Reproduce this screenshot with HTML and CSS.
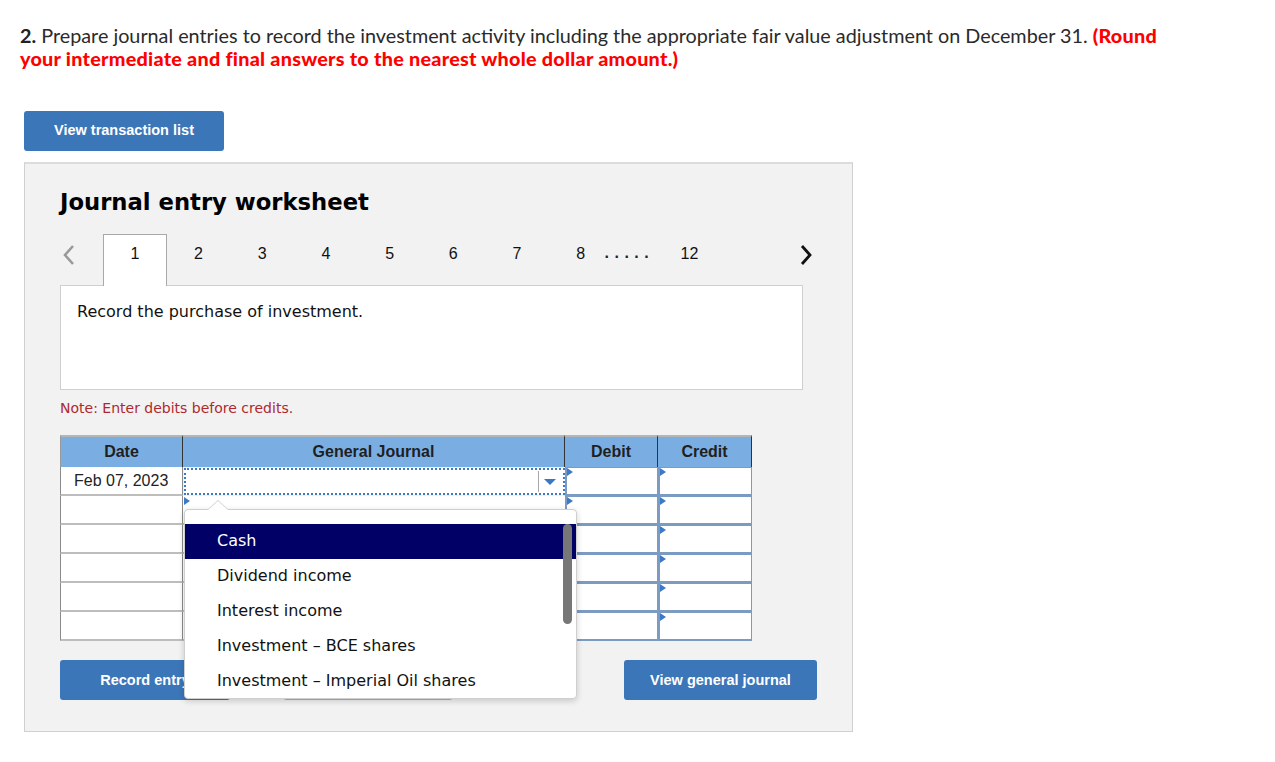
FILE: index.html
```html
<!DOCTYPE html>
<html lang="en">
<head>
<meta charset="utf-8">
<title>Journal entry worksheet</title>
<link rel="stylesheet" href="styles.css">
</head>
<body>
<div class="question">
  <p class="prompt"><b>2.</b> Prepare journal entries to record the investment activity including the appropriate fair value adjustment on December 31. <strong class="round">(Round</strong> <strong class="round">your intermediate and final answers to the nearest whole dollar amount.)</strong></p>
</div>

<button class="btn btn-list">View transaction list</button>

<section class="panel">
  <h2 class="ws-title">Journal entry worksheet</h2>

  <nav class="tabs">
    <span class="arrow prev"><svg width="14" height="22" viewBox="0 0 14 22"><polyline points="11,2 3,11 11,20" fill="none" stroke="#999" stroke-width="2.6"/></svg></span>
    <span class="tab active">1</span>
    <span class="tab">2</span>
    <span class="tab">3</span>
    <span class="tab">4</span>
    <span class="tab">5</span>
    <span class="tab">6</span>
    <span class="tab">7</span>
    <span class="tab">8</span>
    <span class="dots">.....</span>
    <span class="tab last">12</span>
    <span class="arrow next"><svg width="14" height="22" viewBox="0 0 14 22"><polyline points="3,2 11,11 3,20" fill="none" stroke="#111" stroke-width="2.8"/></svg></span>
  </nav>

  <div class="desc">Record the purchase of investment.</div>

  <p class="note">Note: Enter debits before credits.</p>

  <div class="journal-wrap">
    <div class="journal">
      <div class="hd first">Date</div>
      <div class="hd">General Journal</div>
      <div class="hd">Debit</div>
      <div class="hd">Credit</div>

      <div class="c date">Feb 07, 2023</div>
      <div class="c acct focused"><span class="sel-sep"></span><span class="sel-arrow"></span></div>
      <div class="c amt"></div>
      <div class="c amt"></div>

      <div class="c date"></div>
      <div class="c acct"></div>
      <div class="c amt"></div>
      <div class="c amt"></div>

      <div class="c date"></div>
      <div class="c acct"></div>
      <div class="c amt"></div>
      <div class="c amt"></div>

      <div class="c date"></div>
      <div class="c acct"></div>
      <div class="c amt"></div>
      <div class="c amt"></div>

      <div class="c date"></div>
      <div class="c acct"></div>
      <div class="c amt"></div>
      <div class="c amt"></div>

      <div class="c date"></div>
      <div class="c acct"></div>
      <div class="c amt"></div>
      <div class="c amt"></div>
    </div>

    <div class="dropdown">
      <span class="caret"></span>
      <ul class="options">
        <li class="opt selected">Cash</li>
        <li class="opt">Dividend income</li>
        <li class="opt">Interest income</li>
        <li class="opt">Investment – BCE shares</li>
        <li class="opt">Investment – Imperial Oil shares</li>
      </ul>
      <span class="scrollbar"></span>
    </div>
  </div>

  <div class="actions">
    <button class="btn btn-record">Record entry</button>
    <button class="btn btn-clear" aria-label="Clear entry"></button>
    <button class="btn btn-gj">View general journal</button>
  </div>
</section>
</body>
</html>
```

FILE: styles.css
```css
* { box-sizing: border-box; }

body {
  margin: 0;
  background: #fff;
  color: #222;
  font-family: "Liberation Sans", Arial, sans-serif;
}

.question {
  padding: 24px 20px 0;
  max-width: 1184px;
}

.prompt {
  margin: 0;
  font-family: Lato, "Open Sans", sans-serif;
  font-size: 19.8px;
  line-height: 23px;
  color: #2a2a2a;
}

.prompt b { font-weight: 700; color: #222; }

.round {
  color: #f00;
  font-weight: 900;
  letter-spacing: 0.25px;
}

.btn {
  border: none;
  border-radius: 3px;
  background: #3b76b9;
  color: #fff;
  font-family: "Liberation Sans", Arial, sans-serif;
  font-weight: 700;
  font-size: 14.5px;
  height: 40px;
  cursor: pointer;
}

.btn-list {
  display: block;
  margin: 41px 0 0 24px;
  width: 200px;
  padding-bottom: 3px;
}

.panel {
  margin: 11px 0 0 24px;
  width: 829px;
  height: 570px;
  background: #f2f2f2;
  border: 1px solid #d0d0d0;
  border-top: 2px solid #dcdcdc;
  padding: 0 36px 0 35px;
}

.ws-title {
  margin: 24px 0 0;
  font-family: "DejaVu Sans", Verdana, sans-serif;
  font-weight: 700;
  font-size: 22.7px;
  line-height: 28px;
  color: #000;
}

.tabs {
  display: flex;
  align-items: flex-start;
  height: 51px;
  margin-top: 18px;
  font-size: 16px;
  color: #111;
}

.arrow {
  display: flex;
  height: 51px;
  padding-top: 10px;
}

.prev { width: 43px; padding-left: 2px; }

.next { margin-left: auto; margin-right: 3px; }

.tab {
  width: 63.7px;
  height: 51px;
  padding-top: 10px;
  line-height: 20px;
  text-align: center;
}

.tab.active {
  background: #fff;
  border: 1px solid #a9a9a9;
  border-bottom: none;
  position: relative;
  z-index: 1;
  margin-bottom: -1px;
  height: 52px;
  padding-top: 9px;
}

.dots {
  margin-left: -8px;
  width: 58px;
  padding-top: 9px;
  line-height: 20px;
  letter-spacing: 5.5px;
  font-weight: 700;
  color: #222;
}

.tab.last { width: 54px; }

.desc {
  width: 743px;
  height: 105px;
  background: #fff;
  border: 1px solid #cfcfcf;
  padding: 16px 16px;
  font-family: "DejaVu Sans", Verdana, sans-serif;
  font-size: 16px;
  line-height: 20px;
  color: #111;
}

.note {
  margin: 9px 0 0;
  font-family: "DejaVu Sans", Verdana, sans-serif;
  font-size: 14px;
  line-height: 18px;
  color: #b0282d;
}

.journal-wrap {
  position: relative;
  margin-top: 18px;
}

.journal {
  display: grid;
  grid-template-columns: 123px 382px 93px 94px;
  grid-template-rows: 32px repeat(6, 29px);
  width: 692px;
}

.hd {
  height: 32px;
  background: #7aaee3;
  border-top: 2px solid #b5b5b5;
  border-right: 1px solid #333;
  font-weight: 700;
  font-size: 16px;
  line-height: 30px;
  text-align: center;
  color: #1f1f1f;
}

.hd.first { border-left: 1px solid #999; }

.c {
  position: relative;
  background: #fff;
  font-size: 16px;
  line-height: 27px;
}

.date {
  border-left: 1px solid #8a8a8a;
  border-right: 1px solid #8a8a8a;
  border-bottom: 2px solid #bdbdbd;
  padding-left: 13px;
  color: #222;
}

.acct {
  border-bottom: 2px solid #bdbdbd;
}

.acct::before,
.amt::before {
  content: "";
  position: absolute;
  left: 1px;
  top: 1px;
  border-left: 6px solid #3b7ac6;
  border-top: 4px solid transparent;
  border-bottom: 4px solid transparent;
}

.acct.focused {
  border: 2px dotted #3d78c4;
  margin: 1px 0 1px 1px;
}

.acct.focused::before { display: none; }

.sel-sep {
  position: absolute;
  right: 24px;
  top: 1px;
  bottom: 1px;
  width: 1px;
  background: #a8a8a8;
}

.sel-arrow {
  position: absolute;
  right: 7px;
  top: 9px;
  border-top: 6px solid #3b76c4;
  border-left: 6px solid transparent;
  border-right: 6px solid transparent;
}

.amt {
  border-top: 1px solid #7b9bc3;
  border-bottom: 2px solid #7b9bc3;
  border-left: 2px solid #7b9bc3;
  border-right: 1px solid #7b9bc3;
}

.amt::before { left: 0; top: 0; }

.dropdown {
  position: absolute;
  left: 124px;
  top: 74px;
  width: 393px;
  height: 190px;
  background: #fff;
  border: 1px solid #cfcfcf;
  border-radius: 4px;
  box-shadow: 0 2px 6px rgba(0, 0, 0, 0.18);
  z-index: 5;
}

.caret {
  position: absolute;
  left: 22px;
  top: -10px;
  width: 0;
  height: 0;
  border-left: 11px solid transparent;
  border-right: 11px solid transparent;
  border-bottom: 10px solid #cfcfcf;
}

.caret::after {
  content: "";
  position: absolute;
  left: -10px;
  top: 1px;
  border-left: 10px solid transparent;
  border-right: 10px solid transparent;
  border-bottom: 9px solid #fff;
}

.options {
  list-style: none;
  margin: 14px 0 0;
  padding: 0;
}

.opt {
  height: 35px;
  padding-left: 32px;
  font-family: "DejaVu Sans", Verdana, sans-serif;
  font-size: 16px;
  line-height: 33px;
  color: #111;
}

.opt.selected {
  background: #000066;
  color: #fff;
}

.scrollbar {
  position: absolute;
  right: 4px;
  top: 14px;
  width: 9px;
  height: 100px;
  border-radius: 5px;
  background: #777;
}

.actions {
  display: flex;
  margin-top: 19px;
  width: 757px;
}

.btn-record { width: 170px; }

.btn-clear {
  width: 170px;
  margin-left: 53px;
  background: #fff;
  border: 1px solid #9bb8d8;
}

.btn-gj {
  width: 193px;
  margin-left: auto;
}
```
